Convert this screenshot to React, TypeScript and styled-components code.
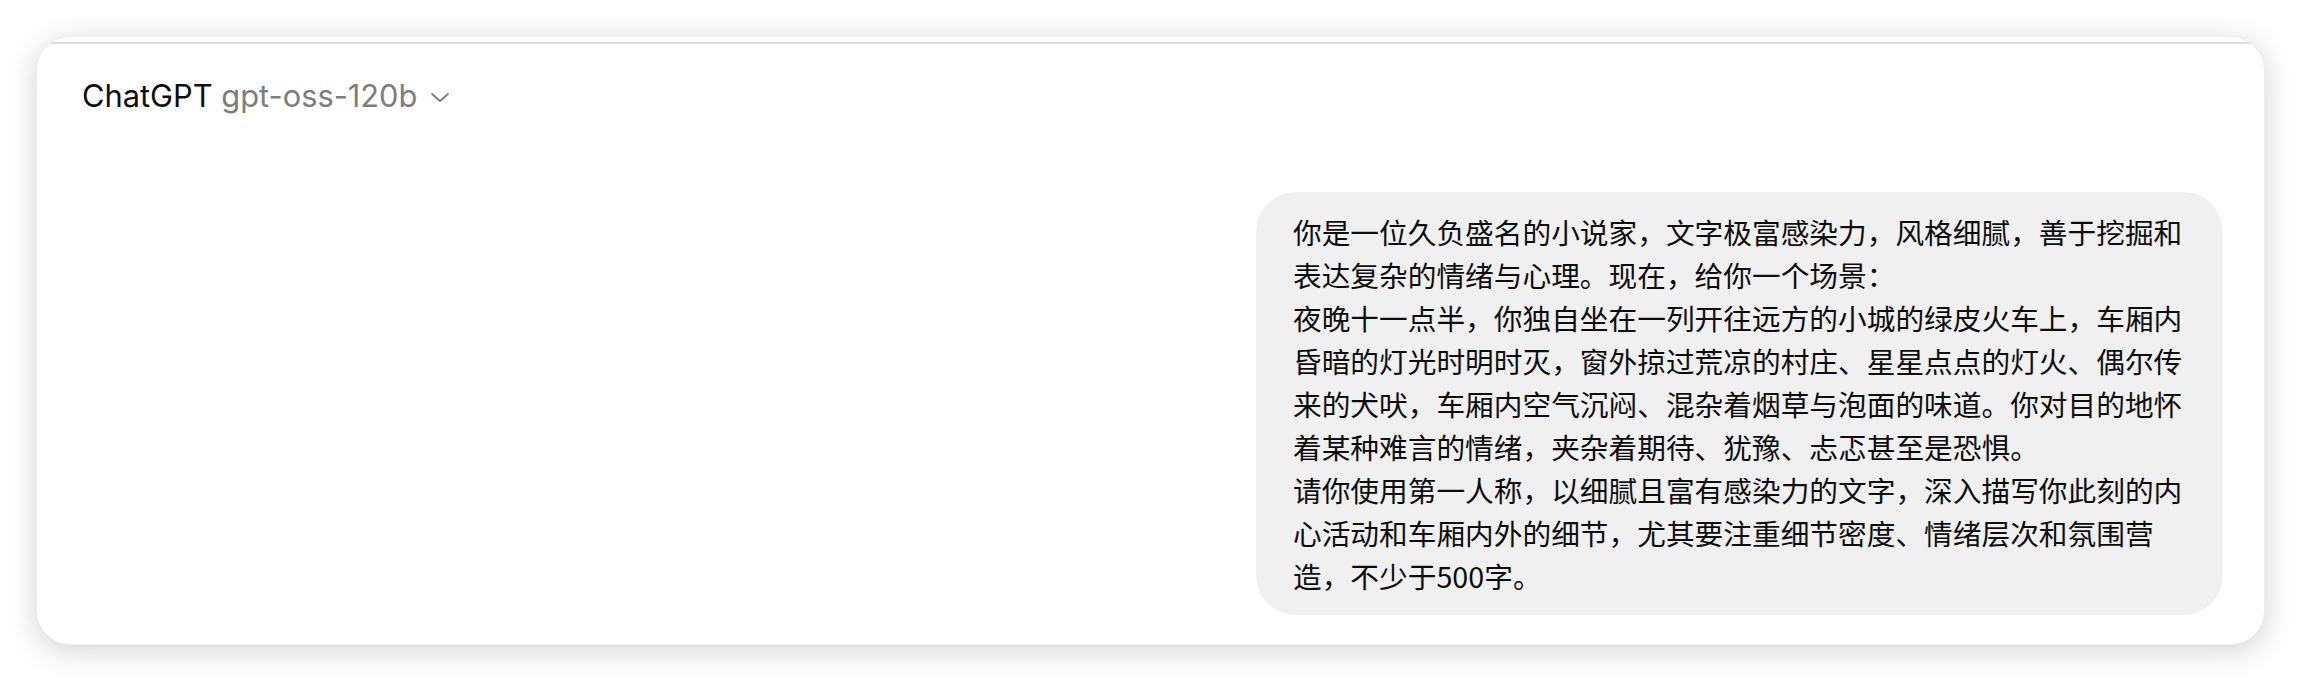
import * as React from 'react';
import styled, { createGlobalStyle } from 'styled-components';

const GlobalStyle = createGlobalStyle`
  html, body {
    margin: 0;
    padding: 0;
    background: #ffffff;
  }
  body {
    font-family: Inter, 'Noto Sans', sans-serif;
  }
`;

const Page = styled.div`
  padding: 36px 37px 37px 36px;
`;
const Card = styled.div`
  background: #ffffff;
  border: 1px solid #ececec;
  border-radius: 34px;
  box-shadow: 0 6px 30px rgba(0, 0, 0, 0.18);
  overflow: hidden;
  padding-bottom: 29px;
`;
const TopLine = styled.div`
  margin-top: 5px;
  height: 2px;
  background: #dcdcdc;
`;
const Header = styled.div`
  display: flex;
  align-items: center;
  padding: 32px 45px 0;
  height: 40px;
`;
const ModelButton = styled.div`
  display: flex;
  align-items: center;
  gap: 13px;
  font-size: 30.8px;
  line-height: 40px;
`;
const Brand = styled.span`
  color: #0d0d0d;
`;
const Model = styled.span`
  color: #7d7d7d;
`;
const Chevron = styled.svg`
  width: 20px;
  height: 20px;
  margin-top: 3px;
`;
const Thread = styled.div`
  display: flex;
  justify-content: flex-end;
  padding: 76px 41px 0;
`;
const Bubble = styled.div`
  max-width: 967px;
  box-sizing: border-box;
  padding: 18px 37px;
  background: #f0f0f0;
  border-radius: 40px;
  color: #0d0d0d;
  font-family: 'Noto Sans CJK SC', sans-serif;
  font-size: 28.7px;
  line-height: 43px;
  white-space: pre-wrap;
`;

const prompt = `你是一位久负盛名的小说家，文字极富感染力，风格细腻，善于挖掘和表达复杂的情绪与心理。现在，给你一个场景：
夜晚十一点半，你独自坐在一列开往远方的小城的绿皮火车上，车厢内昏暗的灯光时明时灭，窗外掠过荒凉的村庄、星星点点的灯火、偶尔传来的犬吠，车厢内空气沉闷、混杂着烟草与泡面的味道。你对目的地怀着某种难言的情绪，夹杂着期待、犹豫、忐忑甚至是恐惧。
请你使用第一人称，以细腻且富有感染力的文字，深入描写你此刻的内心活动和车厢内外的细节，尤其要注重细节密度、情绪层次和氛围营造，不少于500字。`;

export default function App() {
  return (
    <Page>
      <GlobalStyle />
      <Card>
        <TopLine />
        <Header>
          <ModelButton>
            <span>
              <Brand>ChatGPT</Brand> <Model>gpt-oss-120b</Model>
            </span>
            <Chevron viewBox="0 0 20 20" fill="none">
              <polyline
                points="2,6 10,13 18,6"
                stroke="#7d7d7d"
                strokeWidth="1.8"
                strokeLinecap="round"
                strokeLinejoin="round"
              />
            </Chevron>
          </ModelButton>
        </Header>
        <Thread>
          <Bubble>{prompt}</Bubble>
        </Thread>
      </Card>
    </Page>
  );
}
